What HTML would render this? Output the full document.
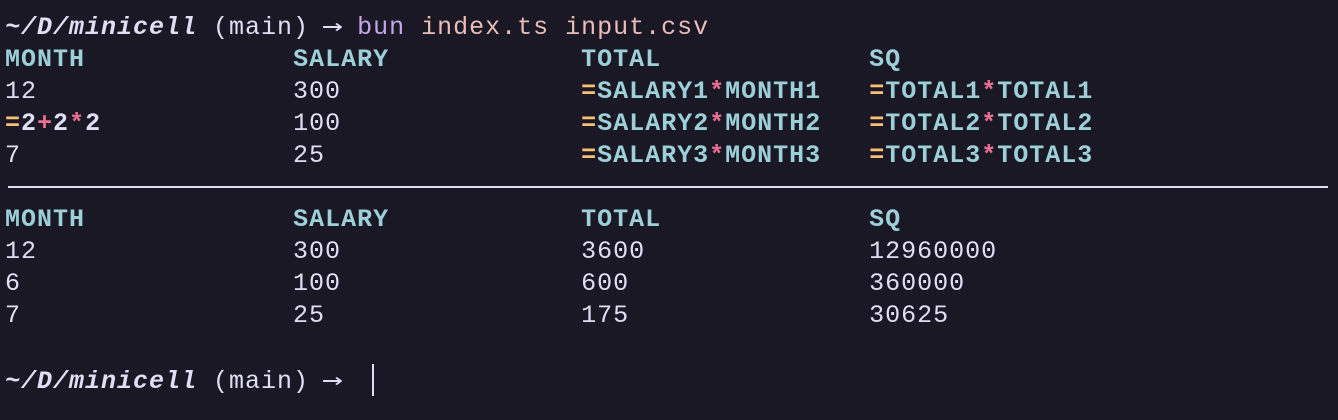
<!DOCTYPE html>
<html><head><style>
html,body{margin:0;padding:0;background:#1a1824;width:1338px;height:420px;overflow:hidden}
pre{margin:0;position:absolute;left:5px;top:10px;font-family:"Liberation Mono",monospace;font-size:25px;letter-spacing:1px;line-height:32px;color:#e0def4}
.t{color:#9ccfd8;font-weight:bold}
.o{color:#f6c177;font-weight:bold}
.p{color:#eb6f92;font-weight:bold}
.w{font-weight:bold}
.i{font-style:italic;font-weight:bold}
.b{color:#c4a7e7}
.r{color:#ebbcba}
.a{font-family:"DejaVu Sans Mono",monospace;display:inline-block;width:16px;transform:scaleX(1.4);letter-spacing:0}
.hr{position:absolute;left:8px;top:186px;width:1320px;height:2px;background:#e0def4}
.cur{position:absolute;left:372px;top:364px;width:2px;height:32px;background:#e0def4}
</style></head><body>
<pre><span class="i">~/D/minicell</span> (main) <span class="a">→</span> <span class="b">bun</span> <span class="r">index.ts input.csv</span>
<span class="t">MONTH</span>             <span class="t">SALARY</span>            <span class="t">TOTAL</span>             <span class="t">SQ</span>
12                300               <span class="o">=</span><span class="t">SALARY1</span><span class="p">*</span><span class="t">MONTH1</span>   <span class="o">=</span><span class="t">TOTAL1</span><span class="p">*</span><span class="t">TOTAL1</span>
<span class="o">=</span><span class="w">2</span><span class="p">+</span><span class="w">2</span><span class="p">*</span><span class="w">2</span>            100               <span class="o">=</span><span class="t">SALARY2</span><span class="p">*</span><span class="t">MONTH2</span>   <span class="o">=</span><span class="t">TOTAL2</span><span class="p">*</span><span class="t">TOTAL2</span>
7                 25                <span class="o">=</span><span class="t">SALARY3</span><span class="p">*</span><span class="t">MONTH3</span>   <span class="o">=</span><span class="t">TOTAL3</span><span class="p">*</span><span class="t">TOTAL3</span>

<span class="t">MONTH</span>             <span class="t">SALARY</span>            <span class="t">TOTAL</span>             <span class="t">SQ</span>
12                300               3600              12960000
6                 100               600               360000
7                 25                175               30625

<span class="i">~/D/minicell</span> (main) <span class="a">→</span> </pre>
<div class="hr"></div>
<div class="cur"></div>
</body></html>
